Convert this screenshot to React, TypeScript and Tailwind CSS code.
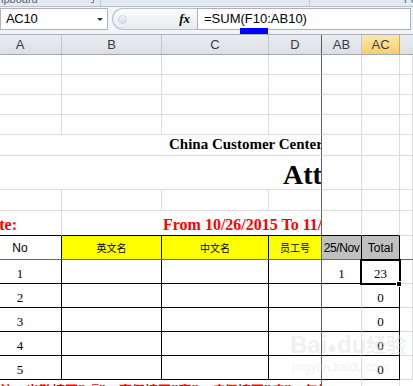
import React from "react";

const g = "border-r border-b border-[#dadcdd]";
const dz = "border-b border-[#dadcdd] border-r border-r-[#5f5f5f]";

function PlainRow({ h }: { h: string }) {
  return (
    <div className={`flex ${h}`}>
      <div className={`w-[62px] shrink-0 ${g}`} />
      <div className={`w-[100px] shrink-0 ${g}`} />
      <div className={`w-[107px] shrink-0 ${g}`} />
      <div className={`w-[53px] shrink-0 ${dz}`} />
      <div className={`w-[40px] shrink-0 ${g}`} />
      <div className={`w-[38px] shrink-0 ${g}`} />
      <div className={`w-[13px] shrink-0 ${g}`} />
    </div>
  );
}

function DataRow({ no, ab, total }: { no: string; ab?: string; total: string }) {
  return (
    <div className="flex h-[24px] font-['Liberation_Serif',serif] text-[13px] text-black">
      <div className="w-[62px] shrink-0 border-r border-b border-black flex items-end">
        <div className="w-[40px] text-center leading-none pb-[3px]">{no}</div>
      </div>
      <div className="w-[100px] shrink-0 border-r border-b border-black" />
      <div className="w-[107px] shrink-0 border-r border-b border-black" />
      <div className="w-[53px] shrink-0 border-b border-black border-r border-r-[#5f5f5f]" />
      <div className="w-[40px] shrink-0 border-r border-b border-[#dadcdd] border-b-black flex items-end justify-center leading-none pb-[3px]">
        {ab}
      </div>
      <div className="w-[38px] shrink-0 border-r border-b border-black flex items-end justify-center leading-none pb-[3px]">
        {total}
      </div>
      <div className={`w-[13px] shrink-0 ${g}`} />
    </div>
  );
}

export default function App() {
  return (
    <div className="relative w-[413px] h-[386px] overflow-hidden bg-white font-['Liberation_Sans',Arial,sans-serif]">
      {/* ribbon bottom edge */}
      <div className="flex h-[7px] bg-[#e4eaf2] border-b border-[#b8c1cc] overflow-hidden text-[11px] text-[#5b6472] leading-[11px]">
        <div className="w-[101px] shrink-0 border-r border-[#c3cbd6] relative">
          <span className="block -mt-[6px] pl-[1px]">ipboard</span>
          <span className="absolute right-[6px] top-0 w-[3px] h-[3px] border-r border-b border-[#7b8594]" />
        </div>
        <div className="w-[209px] shrink-0 border-r border-[#c3cbd6]" />
        <div className="flex-1">
          <span className="block -mt-[6px] pl-[94px]">Font</span>
        </div>
      </div>

      {/* formula bar */}
      <div className="flex items-center h-[24px] bg-[#f1f4f8] pr-[2px]">
        <div className="w-[108px] h-[22px] shrink-0 bg-white border border-[#abb2bb] flex items-center justify-between pl-[5px] pr-[4px]">
          <span className="text-[13px] text-black tracking-[-0.3px]">AC10</span>
          <span className="w-0 h-0 border-l-[3px] border-r-[3px] border-t-[3px] border-l-transparent border-r-transparent border-t-[#333]" />
        </div>
        <div className="w-[4px] shrink-0" />
        <div className="w-[85px] h-[22px] shrink-0 rounded-l-full border border-r-0 border-[#b8bfc8] bg-gradient-to-b from-[#fbfcfd] to-[#e6eaef] flex items-center pl-[5px] pr-[7px] justify-between">
          <span className="w-[9px] h-[9px] rounded-full bg-gradient-to-b from-[#f4f6f8] to-[#d6dbe1] border border-[#d0d5db]" />
          <span className="font-['Liberation_Serif',serif] italic font-bold text-[13px] text-black">fx</span>
        </div>
        <div className="flex-1 h-[22px] bg-white border border-[#abb2bb] flex items-center pl-[6px]">
          <span className="text-[13px] text-black">=SUM(F10:AB10)</span>
        </div>
      </div>
      <div className="h-[4px] bg-[#f1f4f8] border-b border-[#a9b0b8]" />

      {/* column headers */}
      <div className="flex h-[20px] text-[13px] text-[#3b3b3b] bg-gradient-to-b from-[#e9ecf0] to-[#dcdfe4] border-b border-[#a3a9b0]">
        <div className="w-[62px] shrink-0 border-r border-[#c4c9cf] flex items-center"><span className="w-[40px] text-center">A</span></div>
        <div className="w-[100px] shrink-0 border-r border-[#c4c9cf] flex items-center justify-center">B</div>
        <div className="w-[107px] shrink-0 border-r border-[#c4c9cf] flex items-center justify-center">C</div>
        <div className="w-[53px] shrink-0 border-r border-[#5f5f5f] flex items-center justify-center">D</div>
        <div className="w-[40px] shrink-0 border-r border-[#c4c9cf] flex items-center justify-center">AB</div>
        <div className="w-[38px] shrink-0 border-r border-[#e2a640] bg-gradient-to-b from-[#fce9a8] to-[#f6cf6a] flex items-center justify-center">AC</div>
        <div className="w-[13px] shrink-0" />
      </div>

      <PlainRow h="h-[20px]" />
      <PlainRow h="h-[20px]" />
      <PlainRow h="h-[20px]" />
      <PlainRow h="h-[20px]" />

      {/* China Customer Center */}
      <div className="flex h-[21px]">
        <div className={`w-[322px] shrink-0 ${dz} overflow-hidden flex items-end pb-[3px]`}>
          <span className="pl-[169px] whitespace-nowrap font-['Liberation_Serif',serif] font-bold text-[15px] leading-[15px] text-black">
            China Customer Center
          </span>
        </div>
        <div className={`w-[40px] shrink-0 ${g}`} />
        <div className={`w-[38px] shrink-0 ${g}`} />
        <div className={`w-[13px] shrink-0 ${g}`} />
      </div>

      {/* Attendance title */}
      <div className="flex h-[34px]">
        <div className={`w-[322px] shrink-0 ${dz} overflow-hidden flex items-end`}>
          <span className="pl-[283px] whitespace-nowrap font-['Liberation_Serif',serif] font-bold text-[28px] leading-[28px] text-black">
            Attendance
          </span>
        </div>
        <div className={`w-[40px] shrink-0 ${g}`} />
        <div className={`w-[38px] shrink-0 ${g}`} />
        <div className={`w-[13px] shrink-0 ${g}`} />
      </div>

      <PlainRow h="h-[21px]" />

      {/* date range */}
      <div className="flex h-[25px] font-['Liberation_Serif',serif] font-bold text-[16px] leading-[16px] text-[#ff0000]">
        <div className="w-[62px] shrink-0 border-r border-[#dadcdd] border-b border-b-black flex items-end pb-[2px]">
          <div className="w-[17px] flex justify-end overflow-hidden whitespace-nowrap">
            <span>Date:</span>
          </div>
        </div>
        <div className="w-[260px] shrink-0 border-b border-black border-r border-r-[#5f5f5f] overflow-hidden flex items-end pb-[2px]">
          <span className="pl-[101px] whitespace-nowrap">From 10/26/2015 To 11/25/2015</span>
        </div>
        <div className="w-[40px] shrink-0 border-r border-[#dadcdd] border-b border-b-black" />
        <div className="w-[38px] shrink-0 border-r border-[#dadcdd] border-b border-b-black" />
        <div className={`w-[13px] shrink-0 ${g}`} />
      </div>

      {/* table header */}
      <div className="flex h-[24px] border-b border-[#6a6a6a] text-[12px] text-black">
        <div className="w-[62px] shrink-0 border-r border-black flex items-center"><span className="w-[40px] text-center">No</span></div>
        <div className="w-[100px] shrink-0 border-r border-black bg-[#ffff00] flex items-center justify-center text-[10px] font-['Noto_Sans_CJK_SC',sans-serif]">英文名</div>
        <div className="w-[107px] shrink-0 border-r border-black bg-[#ffff00] flex items-center justify-center text-[10px] font-['Noto_Sans_CJK_SC',sans-serif]">中文名</div>
        <div className="w-[53px] shrink-0 border-r border-[#5f5f5f] bg-[#ffff00] flex items-center justify-center text-[10px] font-['Noto_Sans_CJK_SC',sans-serif]">员工号</div>
        <div className="w-[40px] shrink-0 border-r border-black bg-[#c0c0c0] flex items-center justify-center tracking-[-0.4px]">25/Nov</div>
        <div className="w-[38px] shrink-0 border-r border-black bg-[#c0c0c0] flex items-center justify-center">Total</div>
        <div className="w-[13px] shrink-0 border-r border-[#dadcdd]" />
      </div>

      <DataRow no="1" ab="1" total="23" />
      <DataRow no="2" total="0" />
      <DataRow no="3" total="0" />
      <DataRow no="4" total="0" />
      <DataRow no="5" total="0" />

      {/* partial red note row */}
      <div className="flex h-[10px]">
        <div className="w-[322px] shrink-0 border-r border-[#5f5f5f] overflow-hidden">
          <span className="block pt-[3px] whitespace-nowrap font-['Noto_Sans_CJK_SC',sans-serif] font-bold text-[13px] leading-[14px] text-[#ff0000]">
            注：出勤填写"√"，事假填写"事"，病假填写"病"，年假填写"年"
          </span>
        </div>
        <div className="w-[40px] shrink-0 border-r border-[#dadcdd]" />
        <div className="w-[38px] shrink-0 border-r border-[#dadcdd]" />
        <div className="w-[13px] shrink-0" />
      </div>

      {/* selected cell AC10 */}
      <div className="absolute left-[360px] top-[259px] w-[41px] h-[26px] border-2 border-black pointer-events-none" />
      <div className="absolute left-[396px] top-[281px] w-[6px] h-[6px] bg-black border border-white" />

      {/* formula reference marker */}
      <div className="absolute left-[240px] top-[28px] w-[28px] h-[6px] bg-[#0000ff]" />

      {/* watermark */}
      <div className="absolute left-[290px] top-[332px] pointer-events-none text-[#d8d8d8]/40">
        <div className="text-[24px] font-bold leading-[26px] whitespace-nowrap">Bai<span className="text-[16px]">●</span>du<span className="font-['Noto_Sans_CJK_SC',sans-serif] text-[20px]">经验</span></div>
        <div className="text-[12px] leading-[12px] pl-[2px] whitespace-nowrap">jingyan.baidu.com</div>
      </div>
    </div>
  );
}
